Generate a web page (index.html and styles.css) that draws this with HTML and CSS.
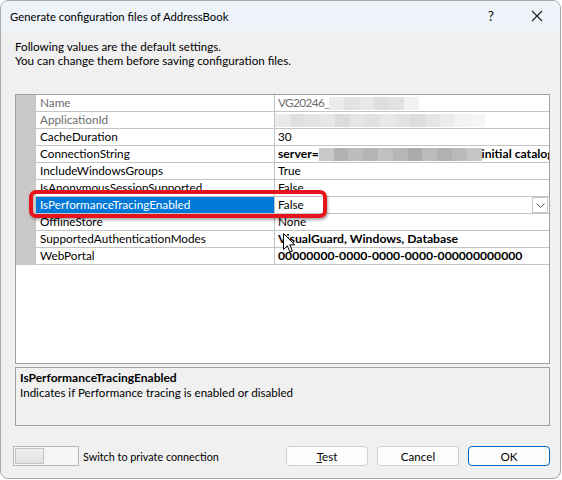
FILE: index.html
```html
<!DOCTYPE html>
<html>
<head>
<meta charset="utf-8">
<link rel="stylesheet" href="styles.css">
</head>
<body>
<div class="window">
  <div class="titlebar">
    <span class="title">Generate configuration files of AddressBook</span>
    <span class="help">?</span>
    <span class="close"><svg width="12" height="12" viewBox="0 0 12 12"><path d="M1 1 L11 11 M11 1 L1 11" stroke="#1a1a1a" stroke-width="1.1" fill="none"/></svg></span>
  </div>
  <div class="content">
    <p class="intro">Following values are the default settings.<br>You can change them before saving configuration files.</p>
    <div class="grid">
      <div class="row ro"><div class="mg"></div><div class="nm">Name</div><div class="vl"><span class="pre">VG20246_</span><span class="blur"><i style="background:#ebebeb"></i><i style="background:#e3e3e3"></i><i style="background:#e8e8e8"></i><i style="background:#dedede"></i><i style="background:#e2e2e2"></i><i style="background:#f2f2f2"></i></span></div></div>
      <div class="row ro"><div class="mg"></div><div class="nm">ApplicationId</div><div class="vl nopad"><span class="blur"><i style="background:#eaeaea"></i><i style="background:#dfdfdf"></i><i style="background:#e4e4e4"></i><i style="background:#e7e7e7"></i><i style="background:#dcdcdc"></i><i style="background:#e6e6e6"></i><i style="background:#e1e1e1"></i><i style="background:#e8e8e8"></i><i style="background:#e3e3e3"></i><i style="background:#dddddd"></i><i style="background:#e5e5e5"></i><i style="background:#ececec"></i><i style="background:#f3f3f3"></i><i style="background:#f6f6f6"></i></span></div></div>
      <div class="row"><div class="mg"></div><div class="nm">CacheDuration</div><div class="vl">30</div></div>
      <div class="row"><div class="mg"></div><div class="nm">ConnectionString</div><div class="vl b"><span class="pre">server=</span><span class="blur dark"><i style="background:#c8c8c8"></i><i style="background:#b2b2b2"></i><i style="background:#bdbdbd"></i><i style="background:#b5b5b5"></i><i style="background:#c0c0c0"></i><i style="background:#b9b7b5"></i><i style="background:#a9abad"></i><i style="background:#bcbcbc"></i><i style="background:#b1b1b1"></i><i style="background:#bababa"></i><i style="background:#c6c6c6"></i></span>initial catalog</div></div>
      <div class="row"><div class="mg"></div><div class="nm">IncludeWindowsGroups</div><div class="vl">True</div></div>
      <div class="row"><div class="mg"></div><div class="nm">IsAnonymousSessionSupported</div><div class="vl">False</div></div>
      <div class="row sel"><div class="mg"></div><div class="nm">IsPerformanceTracingEnabled</div><div class="vl">False<span class="dd"><svg width="9" height="5" viewBox="0 0 9 5"><path d="M0.5 0.5 L4.5 4.5 L8.5 0.5" stroke="#5a5a5a" fill="none" stroke-width="1"/></svg></span></div></div>
      <div class="row"><div class="mg"></div><div class="nm">OfflineStore</div><div class="vl">None</div></div>
      <div class="row"><div class="mg"></div><div class="nm">SupportedAuthenticationModes</div><div class="vl b">VisualGuard, Windows, Database</div></div>
      <div class="row"><div class="mg"></div><div class="nm">WebPortal</div><div class="vl b">00000000-0000-0000-0000-000000000000</div></div>
    </div>
    <div class="desc">
      <div class="desc-title">IsPerformanceTracingEnabled</div>
      <div>Indicates if Performance tracing is enabled or disabled</div>
    </div>
    <div class="footer">
      <div class="toggle"><div class="thumb"></div></div>
      <span class="toggle-label">Switch to private connection</span>
      <div class="buttons">
        <button class="btn"><u>T</u>est</button>
        <button class="btn">Cancel</button>
        <button class="btn primary">OK</button>
      </div>
    </div>
  </div>
  <div class="highlight"></div>
  <svg class="cursor" width="14" height="21" viewBox="0 0 14 21"><path d="M0.5 0.5 L0.5 16.5 L4.3 12.8 L7 19 L9.4 18 L6.8 11.9 L11.8 11.9 Z" fill="#fff" stroke="#000" stroke-width="1" stroke-linejoin="round"/></svg>
</div>
</body>
</html>
```
FILE: styles.css
```css
* { box-sizing: border-box; }
body {
  margin: 0;
  background: #ffffff;
  font-family: Lato, "Noto Sans", sans-serif;
  font-size: 12px;
  color: #000;
}
.window {
  position: relative;
  width: 561px;
  height: 479px;
  border: 1px solid #a8a8a8;
  border-radius: 8px;
  background: #f0f0f0;
  overflow: hidden;
  display: flex;
  flex-direction: column;
}
.titlebar {
  height: 30px;
  background: #eef3f9;
  display: flex;
  align-items: center;
  padding-left: 9px;
  flex-shrink: 0;
}
.title { flex: 1; font-size: 11.3px; }
.help { width: 14px; margin-right: 29px; font-size: 13px; }
.close { width: 12px; height: 12px; margin-right: 17px; display: flex; }
.content {
  flex: 1;
  padding: 0 10px 0 14px;
  display: flex;
  flex-direction: column;
}
.intro {
  margin: 9px 0 0 0;
  font-size: 11.6px;
  line-height: 14px;
  color: #000;
}
.grid {
  margin-top: 26px;
  height: 270px;
  border: 1px solid #a0a0a0;
  background: #fff;
  flex-shrink: 0;
  font-size: 11.75px;
}
.row {
  display: grid;
  grid-template-columns: 20px 239px 1fr;
  height: 17px;
  line-height: 16px;
}
.mg { background: #c8c8c8; }
.nm {
  border-right: 1px solid #c4c4c4;
  border-bottom: 1px solid #c4c4c4;
  padding-left: 4px;
  white-space: nowrap;
  overflow: hidden;
}
.vl {
  border-bottom: 1px solid #c4c4c4;
  padding-left: 3px;
  white-space: nowrap;
  overflow: hidden;
  display: flex;
  align-items: center;
  position: relative;
}
.vl.nopad { padding-left: 0; }
.vl.b { font-weight: bold; font-size: 12.2px; }
.pre { flex-shrink: 0; }
.ro .pre { letter-spacing: -0.6px; }
.ro .nm, .ro .vl { color: #6d6d6d; }
.blur { display: inline-flex; height: 13px; flex-shrink: 0; }
.blur i { display: block; width: 11.4px; height: 13px; }
.ro .blur i { width: 15px; }
.blur.dark i { width: 14.8px; }
.sel .nm { background: #0078d7; color: #fff; border-bottom-color: #c4c4c4; }
.dd {
  position: absolute;
  right: 1px;
  top: 0;
  width: 16px;
  height: 16px;
  border: 1px solid #c8c8c8;
  background: #fff;
  display: flex;
  align-items: center;
  justify-content: center;
}
.desc {
  margin-top: 3px;
  height: 59px;
  border: 1px solid #a0a0a0;
  padding: 2px 4px 0;
  line-height: 15px;
  font-size: 11.6px;
  flex-shrink: 0;
}
.desc-title { font-weight: bold; font-size: 12px; }
.footer {
  margin-top: 20px;
  height: 20px;
  display: flex;
  align-items: center;
}
.toggle {
  margin-left: -2px;
  width: 66px;
  height: 20px;
  border: 1px solid #b8b8b8;
  background: #f5f5f7;
  padding: 1px;
}
.thumb {
  width: 29px;
  height: 16px;
  border: 1px solid #c4c4c4;
  background: linear-gradient(#f0f0f0, #e2e2e2);
}
.toggle-label { margin-left: 4px; flex: 1; font-size: 10.8px; }
.buttons { display: flex; gap: 9px; }
.btn {
  width: 82px;
  height: 20px;
  border: 1px solid #cfcfcf;
  border-radius: 4px;
  background: #fdfdfd;
  font-family: inherit;
  font-size: 11.6px;
  color: #000;
  padding: 0;
}
.btn u { text-decoration: underline; }
.btn.primary { border-color: #0067c0; }
.highlight {
  position: absolute;
  left: 28px;
  top: 189px;
  width: 298px;
  height: 28px;
  border: 4px solid #e5141c;
  border-radius: 7px;
  box-shadow: 1px 2px 3px rgba(0,0,0,0.35);
}
.cursor {
  position: absolute;
  left: 282px;
  top: 232px;
}
```
